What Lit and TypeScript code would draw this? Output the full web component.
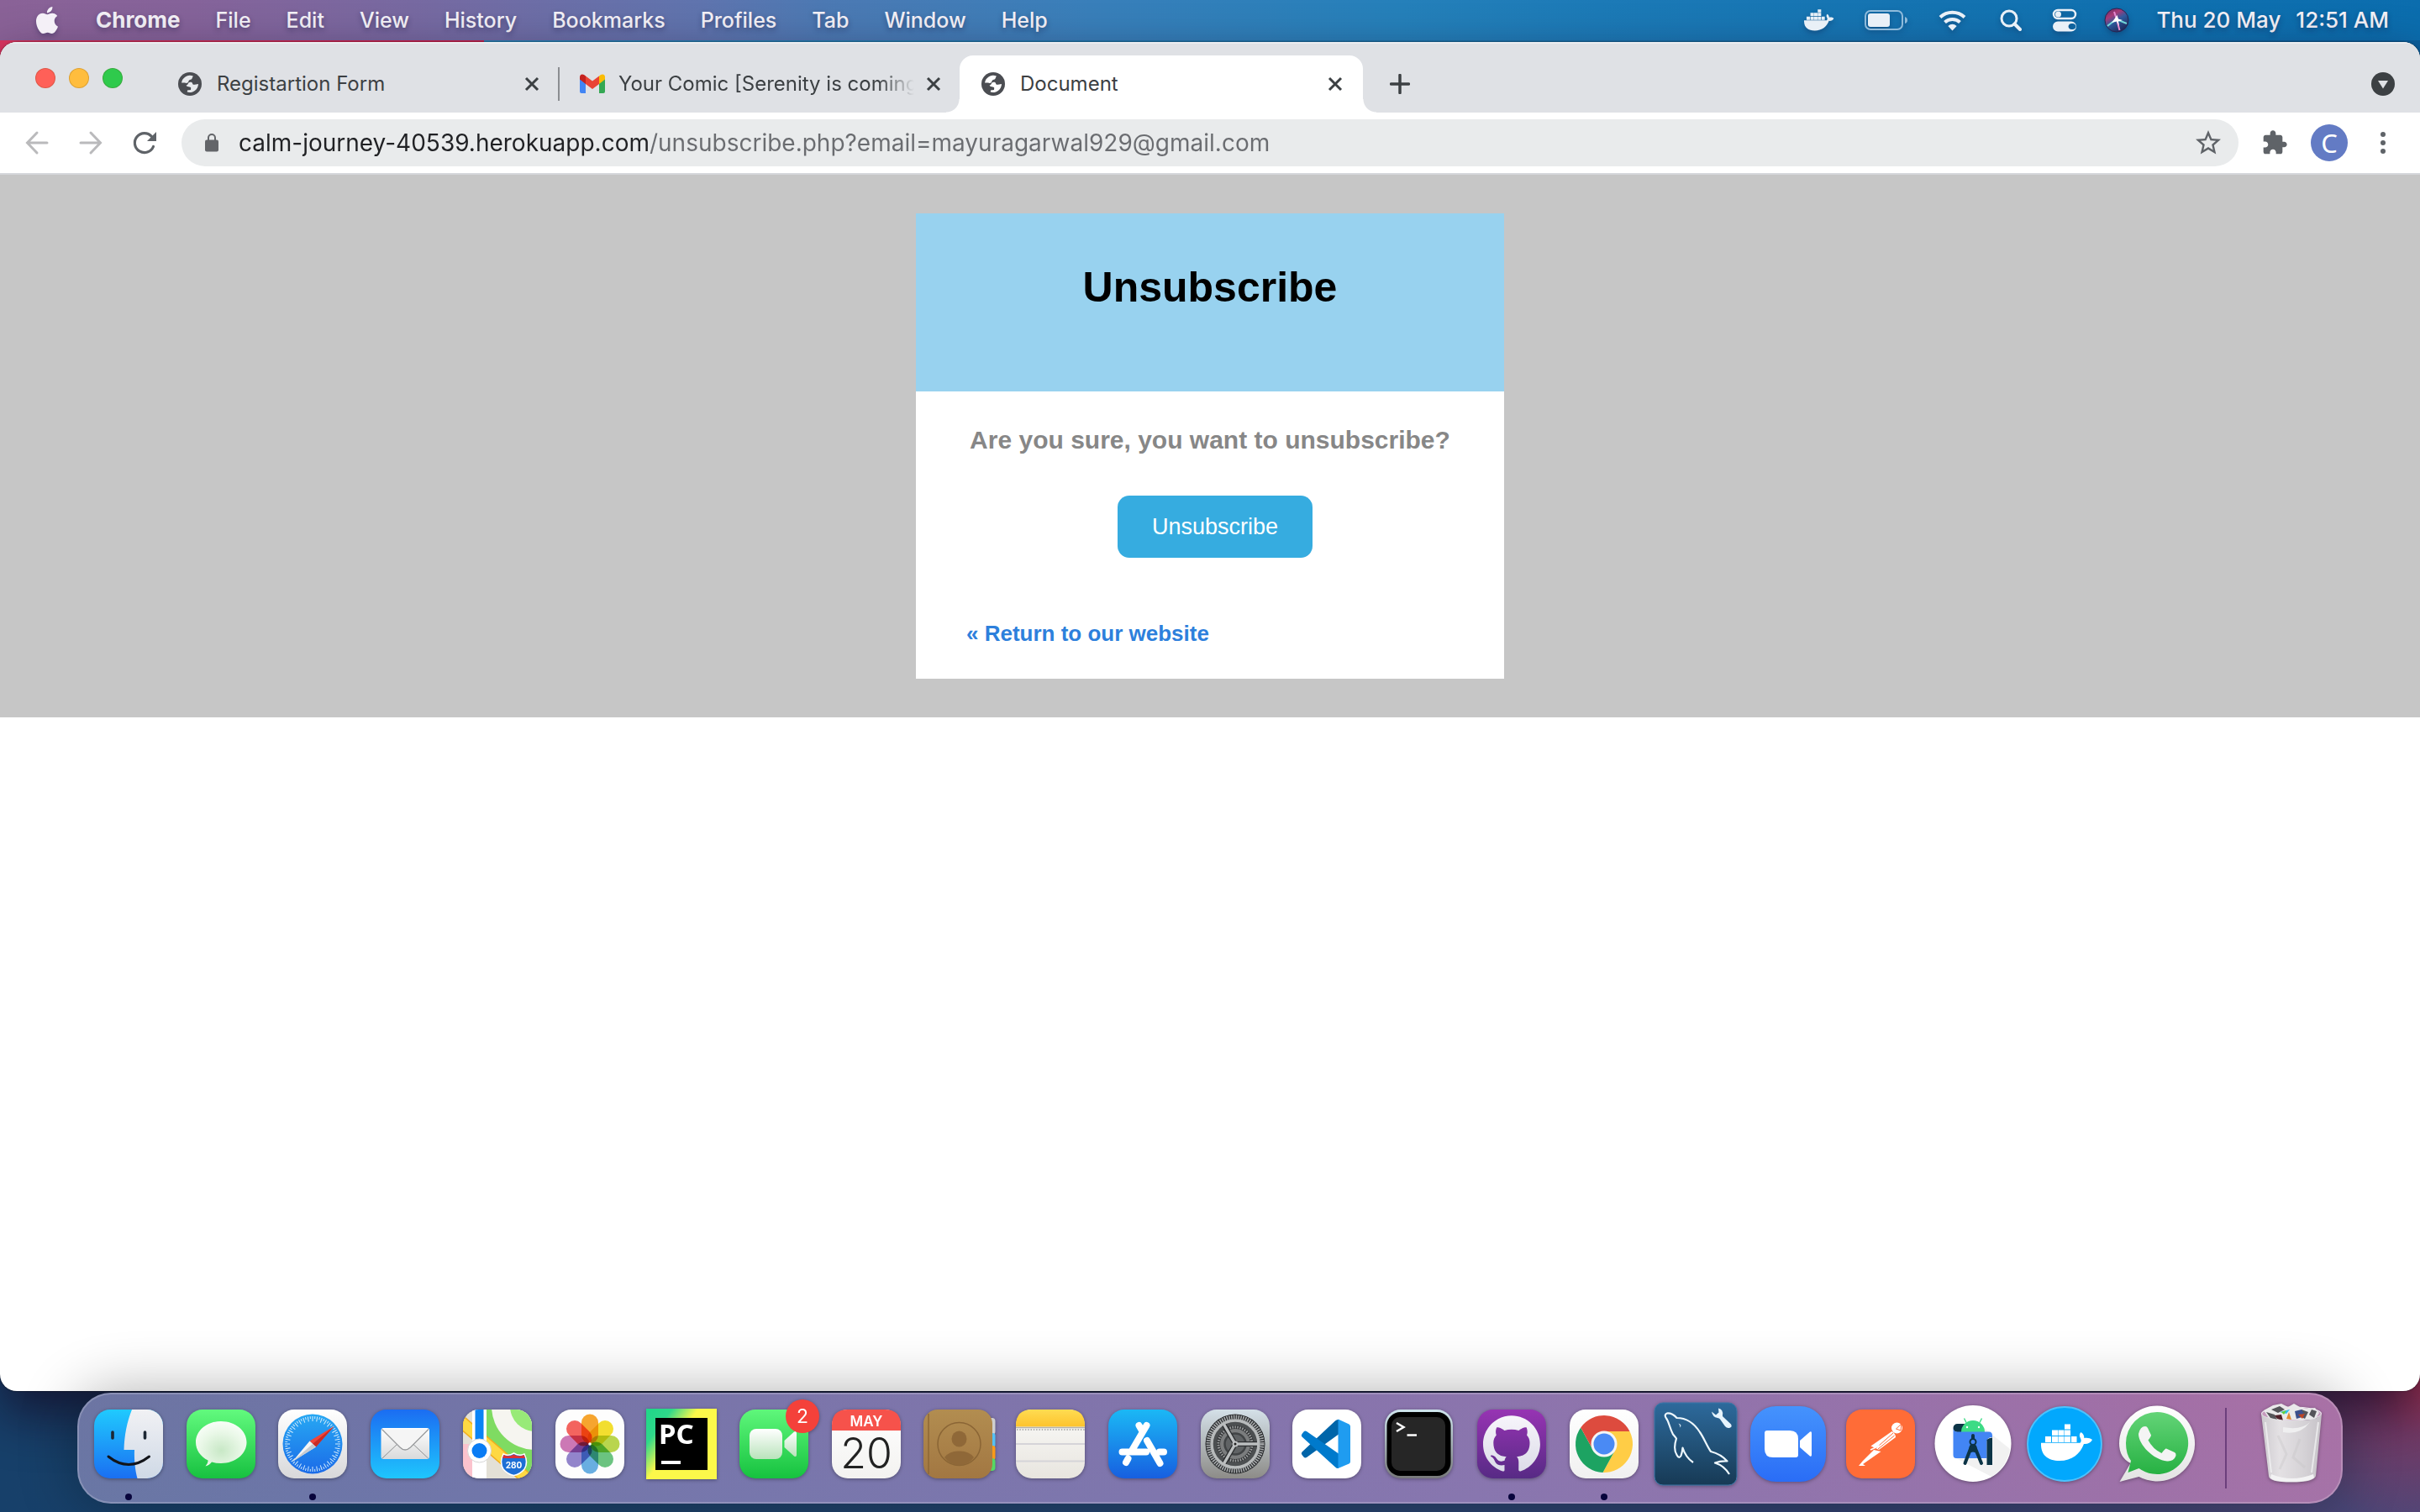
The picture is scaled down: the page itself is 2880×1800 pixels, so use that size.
import { LitElement, html, svg, css, type TemplateResult } from "lit";
import { customElement } from "lit/decorators.js";
import { classMap } from "lit/directives/class-map.js";

/* ---------- shared glyphs ---------- */

const whale = svg`
  <path d="M27 41h7v7h-7zM35 41h7v7h-7zM42.5 41h7v7h-7zM50 41h7v7h-7zM58 41h6.5v7h-6.5zM35 33.5h7v6.5h-7zM42.5 33.5h7v6.5h-7zM50 33.5h7v6.5h-7zM50 26.5h7v6h-7z"/>
  <path d="M22 48.8H68.5C70 47 70 45.5 69 43.5C67.3 40.5 67.5 38 69.5 36C72.5 38 73.5 40.5 73.3 43C76.5 42.2 80.5 42.8 83 45C81 48.8 77.5 50.3 73 50C68.5 62 59 70 44 70C30 70 21.5 63.5 22 48.8Z"/>`;

const globe = html`<svg class="favicon" viewBox="0 0 28 28" aria-hidden="true">
  <circle cx="14" cy="14" r="14" fill="#4b4d52" />
  <path class="land" d="M4 12.6A10.2 10.2 0 0 1 17.8 4.4L16.6 7.2C16.3 8.6 15.2 8.6 14 9C12.3 9.5 12.8 11 11.6 12.2C10.6 13.2 9 13 8 12.6Z" />
  <path class="land" d="M12.4 12.4C14 11.4 16.5 11.6 17 13C17.2 14.8 18.4 15 19.6 14.8L24 14A10.2 10.2 0 0 1 10.8 23.6L11 21.4L15 21L15.2 18.6C15 17 10 17.8 9.6 15.6C10.8 15.4 11.6 14 12.4 12.4Z" />
</svg>`;

const closeIcon = html`<svg class="close-icon" viewBox="0 0 18 18" aria-hidden="true">
  <path d="M2 2L16 16M16 2L2 16" stroke="#3c4043" stroke-width="3" fill="none" />
</svg>`;

/* ---------- menu bar ---------- */

@customElement("menu-bar")
export class MenuBar extends LitElement {
  static styles = css`
    :host {
      display: flex;
      align-items: center;
      justify-content: space-between;
      height: 48px;
      box-sizing: border-box;
      padding: 0 37px 0 44px;
      color: #f4f1f7;
      font: 500 25px/32px Inter, "Liberation Sans", sans-serif;
      background: linear-gradient(90deg, #8a6297 0, #85639a 8%, #7769a1 17%, #5f74ae 29%, #4c79b3 34%, #397fba 45%, #2580ba 58%, #1c7ab7 66%, #1473b1 80%, #0b6dae 100%);
    }
    .menus, .status { display: flex; align-items: center; }
    .menus { gap: 42px; }
    button {
      all: unset;
      white-space: nowrap;
      text-shadow: 0 3px 6px rgba(20, 20, 60, 0.4);
    }
    .app { font-size: 26px; font-weight: 700; }
    svg { display: block; fill: #e9f0f7; filter: drop-shadow(0 3px 3px rgba(10, 20, 60, 0.3)); }
    .apple { width: 32px; height: 32px; fill: #f4f0f7; margin: 0 0 0 -4px; }
    .status { gap: 36px; }
    .siri { margin-left: -4px; }
    .clock { display: flex; gap: 18px; margin-left: -4px; font-size: 26px; }
  `;

  private menus = ["File", "Edit", "View", "History", "Bookmarks", "Profiles", "Tab", "Window", "Help"];

  render() {
    return html`
      <nav class="menus" aria-label="Menu bar">
        <button aria-label="Apple menu">
          <svg class="apple" viewBox="0 0 24 24"><path d="M12.152 6.896c-.948 0-2.415-1.078-3.96-1.04-2.04.027-3.91 1.183-4.961 3.014-2.117 3.675-.546 9.103 1.519 12.09 1.013 1.454 2.208 3.09 3.792 3.039 1.52-.065 2.09-.987 3.935-.987 1.831 0 2.35.987 3.96.948 1.637-.026 2.676-1.48 3.676-2.948 1.156-1.688 1.636-3.325 1.662-3.415-.039-.013-3.182-1.221-3.22-4.857-.026-3.04 2.48-4.494 2.597-4.559-1.429-2.09-3.623-2.324-4.39-2.376-2-.156-3.675 1.09-4.61 1.09zM15.53 3.83c.843-1.012 1.4-2.427 1.245-3.83-1.207.052-2.662.805-3.532 1.818-.78.896-1.454 2.338-1.273 3.714 1.338.104 2.715-.688 3.559-1.701"/></svg>
        </button>
        <button class="app">Chrome</button>
        ${this.menus.map((m) => html`<button>${m}</button>`)}
      </nav>
      <div class="status">
        <button aria-label="Docker"><svg width="36" height="28" viewBox="22 25.5 62 46">${whale}</svg></button>
        <button aria-label="Battery">
          <svg width="52" height="26" viewBox="0 0 52 26">
            <rect x="1" y="2" width="44" height="22" rx="6" fill="none" stroke="#8fbbdb" stroke-width="2" />
            <rect x="4" y="5" width="26" height="16" rx="3" />
            <path d="M48 9Q51 10 51 13T48 17Z" fill="#8fbbdb" />
          </svg>
        </button>
        <button aria-label="Wi-Fi">
          <svg width="33" height="25" viewBox="0 0 33 25">
            <path d="M2 8.5A21 21 0 0 1 31 8.5" fill="none" stroke="#e9f0f7" stroke-width="4" />
            <path d="M7.5 14.5A13 13 0 0 1 25.5 14.5" fill="none" stroke="#e9f0f7" stroke-width="4" />
            <path d="M11.3 19Q16.5 14.5 21.7 19L16.5 24.5Z" />
          </svg>
        </button>
        <button aria-label="Search">
          <svg width="30" height="26" viewBox="-4 0 30 26">
            <circle cx="11" cy="11" r="9" fill="none" stroke="#e9f0f7" stroke-width="3" />
            <path d="M17.5 17.5L24 24" stroke="#e9f0f7" stroke-width="4" stroke-linecap="round" />
          </svg>
        </button>
        <button aria-label="Control Center">
          <svg width="30" height="28" viewBox="0 0 30 28">
            <rect x="2" y="2" width="26" height="10" rx="5" fill="none" stroke="#e9f0f7" stroke-width="2.5" />
            <circle cx="7.5" cy="7" r="3.5" />
            <path fill-rule="evenodd" d="M7 15.5H23A6 6 0 0 1 23 27.5H7A6 6 0 0 1 7 15.5ZM24 18A3.6 3.6 0 1 0 24 25A3.6 3.6 0 1 0 24 18Z" />
          </svg>
        </button>
        <button class="siri" aria-label="Siri">
          <svg width="30" height="30" viewBox="0 0 30 30">
            <defs>
              <linearGradient id="siri" x1="0" y1="0" x2=".6" y2="1">
                <stop offset="0" stop-color="#5a2a62" /><stop offset=".35" stop-color="#a83a78" />
                <stop offset=".6" stop-color="#2f5a9e" /><stop offset="1" stop-color="#1d2c5e" />
              </linearGradient>
            </defs>
            <circle cx="15" cy="15" r="14" fill="url(#siri)" stroke="#2a2450" />
            <path d="M15 14L18.5 27M15 14L12 5" stroke="#e58ad0" stroke-width="2" fill="none" />
            <path d="M4 22Q10 17 15 14L27 19" stroke="#7ff0e6" stroke-width="2" fill="none" opacity=".85" />
            <path d="M9 18Q13 13 15.5 9L17 13.5L22 15L17 16.5L18 22L15 16.5Z" fill="#fff" />
          </svg>
        </button>
        <button class="clock"><span>Thu 20 May</span><span>12:51 AM</span></button>
      </div>`;
  }
}

/* ---------- browser window ---------- */

interface BrowserTab { title: string; icon: TemplateResult; active: boolean; fade: boolean; }

const gmail = html`<svg class="gmail" viewBox="0 0 30 24" aria-hidden="true">
  <path d="M0 4V21Q0 23 2 23H7V9Z" fill="#4285f4" />
  <path d="M30 4V21Q30 23 28 23H23V9Z" fill="#34a853" />
  <path d="M7 2.5V12L15 18L23 12V2.5L15 8.5Z" fill="#ea4335" />
  <path d="M23 2.5V12L30 6.5V4Q30 1 27 .6Q25 .6 23 2.5Z" fill="#fbbc04" />
  <path d="M7 2.5V12L0 6.5V4Q0 1 3 .6Q5 .6 7 2.5Z" fill="#c5221f" />
</svg>`;

@customElement("browser-window")
export class BrowserWindow extends LitElement {
  static styles = css`
    :host {
      display: flex;
      flex-direction: column;
      overflow: hidden;
      border-radius: 20px;
      background: #fff;
      color: #3c4043;
      font: 400 24px/32px Inter, "Liberation Sans", sans-serif;
      box-shadow: 0 0 2px rgba(0, 0, 0, 0.7), 0 26px 60px rgba(20, 5, 30, 0.7);
    }
    button { all: unset; display: flex; align-items: center; justify-content: center; }
    .strip {
      display: flex;
      align-items: flex-end;
      height: 84px;
      box-sizing: border-box;
      padding-right: 30px;
      background: #dfe1e5;
      box-shadow: inset 0 2px 0 #ebedf0;
    }
    .lights { display: flex; gap: 16px; padding: 0 42px 29px; }
    .light { width: 24px; height: 24px; box-sizing: border-box; border-radius: 50%; border: 1px solid rgba(90, 50, 0, 0.2); }
    .red { background: #ff6058; }
    .amber { background: #ffbd3e; }
    .green { background: #2fca4c; }
    .tab {
      position: relative;
      display: flex;
      align-items: center;
      width: 478px;
      height: 68px;
      box-sizing: border-box;
      padding: 0 22px 0 24px;
    }
    .tab.divided { border-right: 2px solid #8b8d91; height: 40px; margin-bottom: 14px; }
    .tab.fading { width: 476px; height: 40px; margin-bottom: 14px; }
    .tab.active { width: 480px; padding: 0 24px 0 26px; border-radius: 16px 16px 0 0; background: #fff; }
    .tab.active::before, .tab.active::after {
      content: "";
      position: absolute;
      bottom: 0;
      width: 16px;
      height: 16px;
    }
    .tab.active::before { left: -16px; background: radial-gradient(circle at 0 0, transparent 15px, #fff 16px); }
    .tab.active::after { right: -16px; background: radial-gradient(circle at 100% 0, transparent 15px, #fff 16px); }
    .favicon { width: 28px; height: 28px; flex: none; }
    .land { fill: #e8eaed; }
    .active .land { fill: #fff; }
    .gmail { width: 30px; height: 24px; flex: none; }
    .title { flex: 1; min-width: 0; overflow: hidden; white-space: nowrap; margin: 0 8px 0 18px; }
    .fading .title { margin-left: 16px; mask-image: linear-gradient(90deg, #000 310px, transparent 352px); }
    .close-icon { width: 18px; height: 18px; display: block; }
    .newtab { width: 24px; height: 24px; margin: 0 0 22px 32px; }
    .spacer { flex: 1; }
    .tabsearch { width: 28px; height: 28px; margin-bottom: 20px; }
    .toolbar {
      display: flex;
      align-items: center;
      height: 72px;
      padding: 0 41px 0 28px;
      border-bottom: 2px solid #d5d7db;
      background: #fff;
    }
    .nav { width: 32px; height: 32px; margin-right: 32px; }
    .nav:nth-of-type(3) { margin-right: 28px; }
    .omnibox {
      flex: 1;
      display: flex;
      align-items: center;
      height: 56px;
      padding: 0 18px 0 28px;
      border-radius: 28px;
      background: #e9ebec;
    }
    .lock { width: 16px; height: 22px; flex: none; }
    .url {
      flex: 1;
      min-width: 0;
      height: 40px;
      margin: 0 16px 0 24px;
      padding: 0;
      border: 0;
      outline: 0;
      color: transparent;
      font: 400 28px/40px Inter, "Liberation Sans", sans-serif;
      background: linear-gradient(90deg, #202124 488px, #6a6c70 488px);
      background-clip: text;
      -webkit-background-clip: text;
    }
    .puzzle { margin-left: 27px; }
    .avatar {
      width: 44px;
      height: 44px;
      margin: 0 39px 0 27px;
      border-radius: 50%;
      background: #637bc4;
      color: #fff;
      font: 400 31px/44px "Noto Sans", sans-serif;
    }
    .page { background: #c6c6c6; padding: 46px 0; display: flex; justify-content: center; font-family: "Liberation Sans", Arial, sans-serif; }
    .card { width: 700px; background: #fff; }
    .card-head { background: #98d2ef; padding: 60px 20px 96px; }
    h1 { margin: 0; color: #000; font-size: 50px; line-height: 56px; text-align: center; }
    .card-body { padding: 40px 60px 36px; }
    h2 { margin: 0; color: #878787; font-size: 30px; line-height: 36px; text-align: center; }
    .unsub {
      width: 232px;
      height: 74px;
      margin: 48px 0 72px 180px;
      border-radius: 14px;
      background: #36ace0;
      color: #fff;
      font-size: 27px;
    }
    .back { display: block; color: #2d80dc; font-size: 26px; line-height: 36px; font-weight: 700; text-decoration: none; }
  `;

  private tabs: BrowserTab[] = [
    { title: "Registartion Form", icon: globe, active: false, fade: false },
    { title: "Your Comic [Serenity is coming", icon: gmail, active: false, fade: true },
    { title: "Document", icon: globe, active: true, fade: false },
  ];

  render() {
    return html`
      <div class="strip">
        <div class="lights">
          <button class="light red" aria-label="Close window"></button>
          <button class="light amber" aria-label="Minimise window"></button>
          <button class="light green" aria-label="Zoom window"></button>
        </div>
        ${this.tabs.map((t) => html`
          <div class=${classMap({ tab: true, active: t.active, fading: t.fade, divided: !t.active && !t.fade })}>
            ${t.icon}<span class="title">${t.title}</span>
            <button aria-label="Close tab">${closeIcon}</button>
          </div>`)}
        <button class="newtab" aria-label="New tab">
          <svg width="24" height="24" viewBox="0 0 24 24"><path d="M12 1.5V22.5M1.5 12H22.5" stroke="#3c4043" stroke-width="3.5" stroke-linecap="round" /></svg>
        </button>
        <div class="spacer"></div>
        <button class="tabsearch" aria-label="Search tabs">
          <svg width="28" height="28" viewBox="0 0 28 28"><circle cx="14" cy="14" r="14" fill="#3c4043" /><path d="M8 10H20L14 19.5Z" fill="#dfe1e5" /></svg>
        </button>
      </div>
      <div class="toolbar">
        <button class="nav" aria-label="Back"><svg width="32" height="32" viewBox="0 0 32 32"><path d="M28 16H5M16 4L4.5 16L16 28" fill="none" stroke="#bababc" stroke-width="3" stroke-linecap="round" /></svg></button>
        <button class="nav" aria-label="Forward"><svg width="32" height="32" viewBox="0 0 32 32"><path d="M4 16H27M16 4L27.5 16L16 28" fill="none" stroke="#bababc" stroke-width="3" stroke-linecap="round" /></svg></button>
        <button class="nav" aria-label="Reload"><svg width="32" height="32" viewBox="0 0 32 32"><path d="M26.5 20.5A11.5 11.5 0 1 1 24.5 8.5" fill="none" stroke="#5f6368" stroke-width="3.2" stroke-linecap="round" /><path d="M30 3V14H19Z" fill="#5f6368" /></svg></button>
        <div class="omnibox">
          <svg class="lock" viewBox="0 0 16 22"><rect y="7.5" width="16" height="14" rx="2" fill="#636569" /><path d="M4 9V5A4 4 0 0 1 12 5V9" fill="none" stroke="#636569" stroke-width="2" /></svg>
          <input class="url" type="text" aria-label="Address" spellcheck="false" value="calm-journey-40539.herokuapp.com/unsubscribe.php?email=mayuragarwal929@gmail.com" />
          <button aria-label="Bookmark this page"><svg width="36" height="36" viewBox="0 0 24 24" fill="#5f6368"><path d="M22 9.24l-7.19-.62L12 2 9.19 8.63 2 9.24l5.46 4.73L5.82 21 12 17.27 18.18 21l-1.63-7.03L22 9.24zM12 15.4l-3.76 2.27 1-4.28-3.32-2.88 4.38-.38L12 6.1l1.71 4.04 4.38.38-3.32 2.88 1 4.28L12 15.4z" /></svg></button>
        </div>
        <button class="puzzle" aria-label="Extensions"><svg width="32" height="32" viewBox="0 0 24 24" fill="#5f6368"><path d="M20.5 11H19V7c0-1.1-.9-2-2-2h-4V3.5C13 2.12 11.88 1 10.5 1S8 2.12 8 3.5V5H4c-1.1 0-1.99.9-1.99 2v3.8H3.5c1.49 0 2.7 1.21 2.7 2.7s-1.21 2.7-2.7 2.7H2V20c0 1.1.9 2 2 2h3.8v-1.5c0-1.49 1.21-2.7 2.7-2.7 1.49 0 2.7 1.21 2.7 2.7V22H17c1.1 0 2-.9 2-2v-4h1.5c1.38 0 2.5-1.12 2.5-2.5S21.88 11 20.5 11z" /></svg></button>
        <button class="avatar" aria-label="Profile">C</button>
        <button aria-label="Chrome menu"><svg width="6" height="28" viewBox="0 0 6 28" fill="#5f6368"><circle cx="3" cy="4" r="3" /><circle cx="3" cy="14" r="3" /><circle cx="3" cy="24" r="3" /></svg></button>
      </div>
      <main class="page">
        <section class="card">
          <header class="card-head"><h1>Unsubscribe</h1></header>
          <div class="card-body">
            <h2>Are you sure, you want to unsubscribe?</h2>
            <button class="unsub">Unsubscribe</button>
            <a class="back" href="#">« Return to our website</a>
          </div>
        </section>
      </main>`;
  }
}

/* ---------- dock ---------- */

interface DockApp { name: string; art: TemplateResult; running?: boolean; }

const tile = (fill: string) => svg`<rect x="9" y="9" width="82" height="82" rx="19" fill=${fill} />`;
const grad = (id: string, top: string, bottom: string) => svg`
  <linearGradient id=${id} x1="0" y1="0" x2="0" y2="1"><stop offset="0" stop-color=${top} /><stop offset="1" stop-color=${bottom} /></linearGradient>`;

const petals = ["#f79a12", "#f3dc12", "#b2d235", "#58bd70", "#55a5e0", "#8474c6", "#c766ad", "#f4504a"];
const ticks = (n: number) => Array.from({ length: n }, (_, i) => (i * 360) / n);

const finder = svg`
  <defs>${grad("g-fi1", "#20cafe", "#1a6ff2")}${grad("g-fi2", "#f1f1f4", "#cfd9e6")}<clipPath id="c-sq"><rect x="9" y="9" width="82" height="82" rx="19" /></clipPath></defs>
  <g clip-path="url(#c-sq)"><rect x="9" y="9" width="82" height="82" fill="url(#g-fi1)" />
  <path d="M54 9C48 24 45 40 44.5 57H57C56.5 70 58 82 60.5 91H91V9Z" fill="url(#g-fi2)" /></g>
  <path d="M31 36V43M69.5 36V43" stroke="#1d2733" stroke-width="3.6" stroke-linecap="round" />
  <path d="M26 65Q50 84 74.5 65" fill="none" stroke="#12141a" stroke-width="3" stroke-linecap="round" />`;

const messages = svg`
  <defs>${grad("g-me", "#62fa7e", "#17c140")}<radialGradient id="g-me2" cx=".5" cy=".65" r=".7"><stop offset="0" stop-color="#c8e8c6" /><stop offset=".6" stop-color="#eaf8e8" /><stop offset="1" stop-color="#fbfffb" /></radialGradient></defs>
  ${tile("url(#g-me)")}
  <path d="M50 23C67 23 80.5 34 80.5 48S67 73 50 73Q44 73 39 71.5Q36 75.5 31.5 76.5Q35 72.5 34.5 69.5C25.5 65 20 57 20 48C20 34 33 23 50 23Z" fill="url(#g-me2)" />`;

const safari = svg`
  <defs>${grad("g-sa1", "#ffffff", "#d8d8da")}${grad("g-sa2", "#27a8f3", "#1b6be8")}</defs>
  ${tile("url(#g-sa1)")}
  <circle cx="50" cy="50" r="35.5" fill="url(#g-sa2)" />
  ${ticks(72).map((a, i) => svg`<path d=${i % 2 ? "M50 17V20" : "M50 17V23"} stroke="#d4ecfb" stroke-width="1" transform="rotate(${a} 50 50)" />`)}
  <path d="M75.5 29L54 53.5L46.5 46.5Z" fill="#f0453a" /><path d="M54 53.5L50 50L75.5 29Z" fill="#c92b25" />
  <path d="M26 71L46.5 46.5L54 53.5Z" fill="#f5f5f5" /><path d="M26 71L50 50L54 53.5Z" fill="#c6cbd1" />`;

const mail = svg`
  <defs>${grad("g-ma", "#1b6df2", "#1fc6fd")}${grad("g-ma2", "#ffffff", "#d9dadb")}</defs>
  ${tile("url(#g-ma)")}
  <rect x="21.5" y="31" width="57.5" height="37" rx="3" fill="url(#g-ma2)" />
  <path d="M23 67L41 50M77.5 67L59.5 50" stroke="#8f9193" stroke-width="1" />
  <path d="M22.5 32.5L44 54Q50 60 56.5 54L78 32.5" fill="#f5f5f5" stroke="#97999b" stroke-width="1.2" />`;

const maps = svg`
  <defs><clipPath id="c-map"><rect x="9" y="9" width="82" height="82" rx="19" /></clipPath></defs>
  <g clip-path="url(#c-map)">
    <rect x="9" y="9" width="82" height="82" fill="#e3e0d6" />
    <rect x="9" y="50" width="14" height="41" fill="#fbc3cd" />
    <path d="M37 9H91V91L37 44Z" fill="#7fdb62" />
    <circle cx="95" cy="5" r="52" fill="#f6f5f0" /><circle cx="95" cy="5" r="30" fill="#98ea78" />
    <path d="M5 22L95 100" stroke="#f2ad1e" stroke-width="15" /><path d="M5 22L95 100" stroke="#fed943" stroke-width="12" />
    <rect x="20" y="9" width="17" height="82" fill="#fff" /><rect x="23.5" y="9" width="10" height="46" fill="#0a84f5" />
    <circle cx="28.5" cy="58" r="14" fill="#fff" stroke="#d5d5d5" /><circle cx="28.5" cy="58" r="9" fill="#0a7cf4" />
  </g>
  <path d="M57 62Q63 65 69.5 61Q76 65 82 62Q87 72 82 80Q77 86 69.5 87.5Q62 86 57 80Q52 72 57 62Z" fill="#1d6fd6" stroke="#fff" stroke-width="1.5" />
  <path d="M57.5 63Q63 66 69.5 62.5Q76 66 81.5 63L83 67H56Z" fill="#dc2f38" />
  <text x="69.500" y="79" text-anchor="middle" class="t-shield">280</text>`;

const photos = svg`
  ${tile("#fdfdfd")}
  ${petals.map((c, i) => svg`<rect x="40" y="14.5" width="20" height="35" rx="10" fill=${c} class="petal" transform="rotate(${i * 45} 50 50)" />`)}
  <circle cx="50" cy="50" r="1.8" fill="#fff" />`;

const pycharm = svg`
  <defs><linearGradient id="g-py" x1="0" y1=".1" x2=".55" y2=".5"><stop offset="0" stop-color="#21d789" /><stop offset=".35" stop-color="#2fd88a" /><stop offset=".8" stop-color="#fcf84a" /></linearGradient></defs>
  <rect x="8" y="8" width="84" height="84" fill="url(#g-py)" /><rect x="19" y="19" width="62" height="62" fill="#000" />
  <text x="23" y="49.500" class="t-pc">PC</text><rect x="26" y="70" width="23" height="4" fill="#fff" />`;

const facetime = svg`
  <defs>${grad("g-ft", "#5ff77b", "#16c23f")}${grad("g-ft2", "#ffffff", "#b9e3bb")}</defs>
  ${tile("url(#g-ft)")}
  <rect x="21" y="32" width="39" height="36" rx="8" fill="url(#g-ft2)" />
  <path d="M62.5 46L74 35.5Q77 34 77 37V63Q77 66 74 64.5L62.5 54Z" fill="url(#g-ft2)" />
  <circle cx="84" cy="17" r="20" fill="#f4413a" /><text x="84" y="25" text-anchor="middle" class="t-badge">2</text>`;

const calendar = svg`
  <defs>${grad("g-ca", "#ffffff", "#f3f2f0")}</defs>
  ${tile("url(#g-ca)")}
  <path d="M9 34V28Q9 9 28 9H72Q91 9 91 28V34Z" fill="#f6524b" />
  <text x="50" y="29" text-anchor="middle" class="t-month">MAY</text>
  <text x="50" y="78.500" text-anchor="middle" class="t-day">20</text>`;

const contacts = svg`
  <defs>${grad("g-co", "#b28d50", "#a27742")}</defs>
  <rect x="80" y="19" width="13.5" height="20" rx="4" fill="#cfcfcf" /><rect x="80" y="37" width="13.5" height="17" rx="3" fill="#55c1f4" />
  <rect x="80" y="52" width="13.5" height="17" rx="3" fill="#fa9a18" /><rect x="80" y="67" width="13.5" height="15" rx="4" fill="#55d964" />
  <rect x="8" y="9" width="82" height="82" rx="17" fill="url(#g-co)" /><path d="M14 14V86" stroke="#8d6735" stroke-width="1.5" />
  <circle cx="50.5" cy="50" r="25.5" fill="none" stroke="#8a6535" stroke-width="1.5" />
  <ellipse cx="50.5" cy="44" rx="9" ry="9.5" fill="#8f6838" />
  <path d="M33 66Q39 58 50.5 58.5Q62 58 68 66Q61 75.5 50.5 75.5T33 66Z" fill="#8f6838" />`;

const notes = svg`
  <defs>${grad("g-no", "#fedc52", "#fdc32d")}${grad("g-no2", "#fafaf8", "#e8e5df")}</defs>
  ${tile("url(#g-no2)")}
  <path d="M9 29.5V28Q9 9 28 9H72Q91 9 91 28V29.5Z" fill="url(#g-no)" />
  <path d="M9 30.5H91" stroke="#b5b3ad" stroke-width="1.5" /><path d="M10 33H91" stroke="#b3b3b3" stroke-width="2" stroke-dasharray="1.5 1.8" />
  <path d="M9 50H91M9 70.5H91" stroke="#d5d4d8" stroke-width="1.8" />`;

const appstore = svg`
  <defs>${grad("g-as", "#1bb8f5", "#175fe0")}</defs>
  ${tile("url(#g-as)")}
  <g stroke="#fff" stroke-width="8" stroke-linecap="round" fill="none">
    <path d="M45.5 28L49 34M55 46L70.5 73M25.5 59.5H54M70 59.5H75M54.5 28L37.5 57M32.5 67.5L30 72" />
  </g>`;

const settings = svg`
  <defs>${grad("g-se", "#d4e0e8", "#8d8c88")}</defs>
  ${tile("url(#g-se)")}
  <circle cx="50" cy="50" r="35.5" fill="#26282a" />
  <circle cx="50" cy="50" r="32" fill="none" stroke="#a6a9ab" stroke-width="5" stroke-dasharray="1.6 1.2" />
  <circle cx="50" cy="50" r="28" fill="#4c4f51" stroke="#b7babb" stroke-width="3.5" />
  <circle cx="50" cy="50" r="20" fill="#7b7d7e" stroke="#323436" stroke-width="4" />
  <circle cx="50" cy="50" r="20" fill="none" stroke="#9c9e9f" stroke-width="3" stroke-dasharray="1.5 1.5" />
  <circle cx="50" cy="50" r="12.5" fill="#606365" stroke="#414446" stroke-width="2.5" />
  <path d="M50 50H76M50 50L37 27.5M50 50L37 72.5" stroke="#2c2e30" stroke-width="6" /><path d="M50 50H77M50 50L36.5 26.5M50 50L36.5 73.5" stroke="#bcbfc0" stroke-width="3.5" />
  <circle cx="50" cy="50" r="3.5" fill="#c2c5c6" /><circle cx="50" cy="50" r="1.5" fill="#222" />`;

const vscode = svg`
  ${tile("#fff")}
  <path d="M64 21V38.5L26 66Q24 67 22.5 65.5L20.5 63Q19 61 20.5 59.5L60 22.5Q62 20.5 64 21Z" fill="#0065a9" />
  <path d="M64 79V61.5L26 35Q24 34 22.5 35.5L20.5 38Q19 40 20.5 41.5L60 77.5Q62 79.5 64 79Z" fill="#007acc" />
  <path d="M63.5 20.5L76.5 26.5Q78 27.5 78 29V71Q78 72.5 76.5 73.5L63.5 79Z" fill="#1f9cf0" />`;

const terminal = svg`
  <defs>${grad("g-te", "#cfe6ee", "#77787a")}</defs>
  <rect x="9" y="9" width="81" height="82" rx="19" fill="url(#g-te)" /><rect x="11.5" y="12" width="76" height="76" rx="16" fill="#000" /><rect x="17" y="18" width="64" height="64" rx="10" fill="#262626" />
  <path d="M23 25L31.5 30L23 35" fill="none" stroke="#fff" stroke-width="2.5" /><path d="M35.5 39.5H47" stroke="#fff" stroke-width="2.5" />`;

const github = svg`
  <defs>${grad("g-gh", "#9734b3", "#572a85")}${grad("g-gh2", "#f7f5fb", "#dcdce8")}</defs>
  ${tile("url(#g-gh)")}
  <path transform="translate(16 15.5) scale(2.83)" fill="url(#g-gh2)" d="M12 .297c-6.63 0-12 5.373-12 12 0 5.303 3.438 9.8 8.205 11.385.6.113.82-.258.82-.577 0-.285-.01-1.04-.015-2.04-3.338.724-4.042-1.61-4.042-1.61C4.422 18.07 3.633 17.7 3.633 17.7c-1.087-.744.084-.729.084-.729 1.205.084 1.838 1.236 1.838 1.236 1.07 1.835 2.809 1.305 3.495.998.108-.776.417-1.305.76-1.605-2.665-.3-5.466-1.332-5.466-5.93 0-1.31.465-2.38 1.235-3.22-.135-.303-.54-1.523.105-3.176 0 0 1.005-.322 3.3 1.23.96-.267 1.98-.399 3-.405 1.02.006 2.04.138 3 .405 2.28-1.552 3.285-1.23 3.285-1.23.645 1.653.24 2.873.12 3.176.765.84 1.23 1.91 1.23 3.22 0 4.61-2.805 5.625-5.475 5.92.42.36.81 1.096.81 2.22 0 1.606-.015 2.896-.015 3.286 0 .315.21.69.825.57C20.565 22.092 24 17.592 24 12.297c0-6.627-5.373-12-12-12" />`;

const chrome = svg`
  <defs>${grad("g-ch", "#ffffff", "#f0f0f0")}</defs>
  ${tile("url(#g-ch)")}
  <path d="M50 35H80.5A34 34 0 0 1 48.5 84L63 57.5Z" fill="#ffcd46" />
  <path d="M22.2 30.5A34 34 0 0 0 48.5 84L63 57.5L37 57.5Z" fill="#1da362" />
  <path d="M22.2 30.5L37 57.5L50 50V35H80.5A34 34 0 0 0 22.2 30.5Z" fill="#dd4b3e" />
  <circle cx="50" cy="50" r="15.5" fill="#f5f5f5" /><circle cx="50" cy="50" r="12.5" fill="#4a8af4" />`;

const workbench = svg`
  <defs>${grad("g-my", "#2d6a9c", "#173a55")}</defs>
  <rect x="1" y="1" width="98" height="98" rx="10" fill="url(#g-my)" stroke="#3a79ab" stroke-width="1" />
  <path d="M90 86Q84 76 73 72.5Q80 70 87.5 70.5Q80 62 68 59C63 52 60 43 55 36C48 25 38 19 27.5 19Q22 13 16 13.5Q12 15 15 19.5C18 23 19 31 23 38.5Q26 42 27 43.5Q23 56 27.5 63Q30 68 32.5 64Q34 60 34.5 54.5Q38 66 47 72" fill="none" stroke="#eef8fe" stroke-width="2.2" stroke-linejoin="round" />
  <path d="M29.5 25.5Q34 27 31.5 30.5Q31.5 27.5 29.5 25.5Z" fill="#e6f4fd" />
  <path d="M77 7.500Q83 9 82 15.500Q81.500 17 83 18L92 26.500Q94 30 90 31Q87 31.500 85 29L79 20.500Q78 19 76 19Q70 18 69 11.500L74 15.500L77.500 12.500Z" fill="#e6f4fd" />`;

const zoom = svg`
  <defs>${grad("g-zo", "#4593fd", "#2a6df6")}</defs>
  <rect x="5" y="5" width="90" height="90" rx="31" fill="url(#g-zo)" />
  <path d="M25 34H52Q62 34 62 44V63Q62 66 59 66H32Q22 66 22 56V37Q22 34 25 34Z" fill="#fff" /><path d="M64 46L76 35.5Q78 34.5 78 37V63Q78 65.5 76 64.5L64 54Z" fill="#fff" />`;

const postman = svg`
  ${tile("#ff6c37")}
  <circle cx="69.5" cy="31" r="6.5" fill="#fff" /><path d="M75 26L68.5 32L74 34Z" fill="none" stroke="#ff6c37" stroke-width="1" />
  <path d="M63.5 35Q68 38 68 42L48 57L38.5 52.5Z" fill="#fff" /><path d="M65 37L44 55.5M66.5 40L47 56" stroke="#ff6c37" stroke-width="1" />
  <path d="M42 57L50.5 59L29 74L32 76H24L29 70Z" fill="#fff" /><path d="M38 57L49 52" stroke="#fff" stroke-width="1.5" />`;

const android = svg`
  <circle cx="50" cy="49.5" r="45.5" fill="#fff" /><path d="M58 27L94 56Q90 78 72 89L28 66L66 68Z" fill="#f1f1f1" />
  <rect x="26.5" y="26" width="20" height="10" rx="5" fill="#0c3446" /><path d="M36 36A14 14 0 0 1 64 36Z" fill="#3ddb85" />
  <path d="M42 24.5L39.5 19.5M58 24.5L60.5 19.5" stroke="#3ddb85" stroke-width="1.4" /><circle cx="43" cy="30" r="1.2" fill="#fff" /><circle cx="57" cy="30" r="1.2" fill="#fff" />
  <path d="M26.5 31Q27 35.5 31 35.5H69Q73 35.5 73 40V42Q67 42 66.5 47V67H30Q26.5 67 26.5 63Z" fill="#4285f4" /><path d="M66.5 45Q69 42.5 73 42.5V75H66.5Z" fill="#0c3446" />
  <path d="M50 40V44M48.5 52L40.5 73M51.5 52L60 73" stroke="#0c3446" stroke-width="4" stroke-linecap="round" /><path d="M46 52H54L56 62Q50 57 44 62Z" fill="#0c3446" /><circle cx="50" cy="47.5" r="3.5" fill="#4285f4" stroke="#0c3446" stroke-width="2" />`;

const docker = svg`<circle cx="50" cy="50" r="44" fill="#02a8fd" stroke="#4cc2fd" stroke-width="1.8" /><g fill="#fff">${whale}</g>`;

const whatsapp = svg`
  <defs>${grad("g-wa", "#63d477", "#27b143")}${grad("g-wa2", "#ffffff", "#e3e3e3")}</defs>
  <path d="M50 4.5A45 45 0 1 1 28.5 89L5.500 95L18.5 73Q5 66 5 49.5A45 45 0 0 1 50 4.5Z" fill="url(#g-wa2)" />
  <path d="M50 12A37 37 0 1 1 28.5 79L15.500 84L19 70Q13 62 13 49A37 37 0 0 1 50 12Z" fill="url(#g-wa)" />
  <path d="M28 38Q30 29 36 29Q38 29 39 31L43 39.5Q43 41 39.5 45.5Q45 56 55.5 61Q60 55 61 55.5L71 60Q73 61 72.500 64Q70 71 62 70.5C46 69 28 51 28 38Z" fill="#f4f4f4" />`;

const trash = svg`
  <defs><linearGradient id="g-tr"><stop offset="0" stop-color="#d0cfd2" /><stop offset=".3" stop-color="#e8e7e8" /><stop offset=".7" stop-color="#d9d8da" /><stop offset="1" stop-color="#c9c7cb" /></linearGradient></defs>
  <ellipse cx="50" cy="14" rx="35.5" ry="8" fill="#c59abd" stroke="#ece6ee" stroke-width="1.2" />
  <path d="M17 10L28 4L38 2L46 6L53 2L60 6L68 8L78 7L83 13L78 21H24Z" fill="#e9e9ea" />
  <path d="M26 9L36 5L42 9L34 13ZM20 12L30 15L33 21L25 19ZM62 9L70 12L66 20L60 17ZM74 9L80 11L77 19L71 15Z" fill="#55565a" />
  <path d="M36 12L48 9L44 14Z" fill="#2fc0ea" /><path d="M38 12L44 10L41 15Z" fill="#62cf3a" /><path d="M47 12L50 21L44 20Z" fill="#e28a33" /><path d="M54 11L62 9L66 17L56 20Z" fill="#3b4f8c" /><path d="M30 16L38 15L40 22L33 20Z" fill="#50222a" /><path d="M58 15L66 14L63 20Z" fill="#bb4524" />
  <path d="M14 14Q18 21 50 22T86 14L79 88Q77 95.5 50 95.5T23 88Z" fill="url(#g-tr)" opacity=".96" />
  <path d="M26 86Q50 96 76 86L77 90Q72 95 50 95T25 90Z" fill="#f3f3f4" /><path d="M40 36Q60 40 72 24Q62 34 40 30Z" fill="#efeff0" />
  <path d="M19 24L26 84M82 24L74 84" stroke="#f6f6f7" stroke-width="2" opacity=".7" /><path d="M34 40L44 62L36 80M60 44L52 66L66 78" stroke="#c5c3c7" stroke-width="3" fill="none" opacity=".35" />`;

@customElement("app-dock")
export class AppDock extends LitElement {
  static styles = css`
    :host {
      display: flex;
      align-items: stretch;
      height: 132px;
      box-sizing: border-box;
      margin: 2px 92px 10px;
      padding: 0 5px 0 4px;
      border: 2px solid rgba(255, 255, 255, 0.2);
      border-radius: 40px;
      background:
        linear-gradient(172deg, rgba(190, 80, 140, 0.14), rgba(90, 130, 190, 0.2)),
        linear-gradient(98deg, #5f7ba6 0, #6579a9 12%, #7479ad 30%, #8077ad 48%, #8d76ae 62%, #9a73aa 76%, #ab6ea4 90%, #b86fa2 100%);
      background-clip: border-box;
      background-origin: border-box;
      box-shadow: 0 0 70px rgba(0, 0, 0, 0.32);
    }
    .apps { flex: 1; display: grid; grid-template-columns: repeat(23, 1fr); }
    button { all: unset; display: flex; flex-direction: column; align-items: center; padding-top: 9px; }
    svg { width: 100px; height: 100px; overflow: visible; filter: drop-shadow(0 1px 2px rgba(0, 0, 0, 0.35)); }
    .dot { width: 8px; height: 8px; margin-top: 9px; border-radius: 50%; background: #08053c; }
    .rule { width: 2px; margin: 16px 27px 16px 26px; background: #6c3f7c; }
    .bin { width: 100px; margin-right: 4px; }
    .petal { mix-blend-mode: multiply; opacity: 0.88; }
    text { font-family: Inter, "Liberation Sans", sans-serif; fill: #fff; }
    .t-shield { font-size: 10px; font-weight: 700; }
    .t-pc { font-size: 33px; font-weight: 700; font-family: "Noto Sans", sans-serif; }
    .t-badge { font-size: 23px; }
    .t-month { font-size: 17px; font-weight: 600; }
    .t-day { font-size: 50px; font-weight: 300; fill: #222; }
  `;

  private apps: DockApp[] = [
    { name: "Finder", art: finder, running: true },
    { name: "Messages", art: messages },
    { name: "Safari", art: safari, running: true },
    { name: "Mail", art: mail },
    { name: "Maps", art: maps },
    { name: "Photos", art: photos },
    { name: "PyCharm", art: pycharm },
    { name: "FaceTime", art: facetime },
    { name: "Calendar", art: calendar },
    { name: "Contacts", art: contacts },
    { name: "Notes", art: notes },
    { name: "App Store", art: appstore },
    { name: "System Preferences", art: settings },
    { name: "Visual Studio Code", art: vscode },
    { name: "Terminal", art: terminal },
    { name: "GitHub Desktop", art: github, running: true },
    { name: "Google Chrome", art: chrome, running: true },
    { name: "MySQL Workbench", art: workbench },
    { name: "Zoom", art: zoom },
    { name: "Postman", art: postman },
    { name: "Android Studio", art: android },
    { name: "Docker", art: docker },
    { name: "WhatsApp", art: whatsapp },
  ];

  render() {
    return html`
      <div class="apps">
        ${this.apps.map((a) => html`
          <button aria-label=${a.name}>
            <svg viewBox="0 0 100 100">${a.art}</svg>
            ${a.running ? html`<span class="dot"></span>` : ""}
          </button>`)}
      </div>
      <div class="rule"></div>
      <button class="bin" aria-label="Trash"><svg viewBox="0 0 100 100">${trash}</svg></button>`;
  }
}

/* ---------- desktop ---------- */

@customElement("app-root")
export class AppRoot extends LitElement {
  static styles = css`
    :host {
      display: flex;
      flex-direction: column;
      min-height: 100vh;
      overflow: hidden;
      background:
        linear-gradient(90deg, #dc3660 0, #cf2452 20%, #2b86bb 20%, #1b76ae 60%, #0a5f9c 100%) top / 100% 120px no-repeat,
        radial-gradient(circle at 100% 91%, #a5304f 0, rgba(140, 50, 90, 0.6) 70px, transparent 180px),
        linear-gradient(90deg, #17406a 0, #1a4169 20%, #25446f 50%, #33416f 78%, #4e4778 100%);
    }
    browser-window { flex: 1; margin-top: 2px; }
  `;

  render() {
    return html`
      <menu-bar></menu-bar>
      <browser-window></browser-window>
      <app-dock></app-dock>`;
  }
}
